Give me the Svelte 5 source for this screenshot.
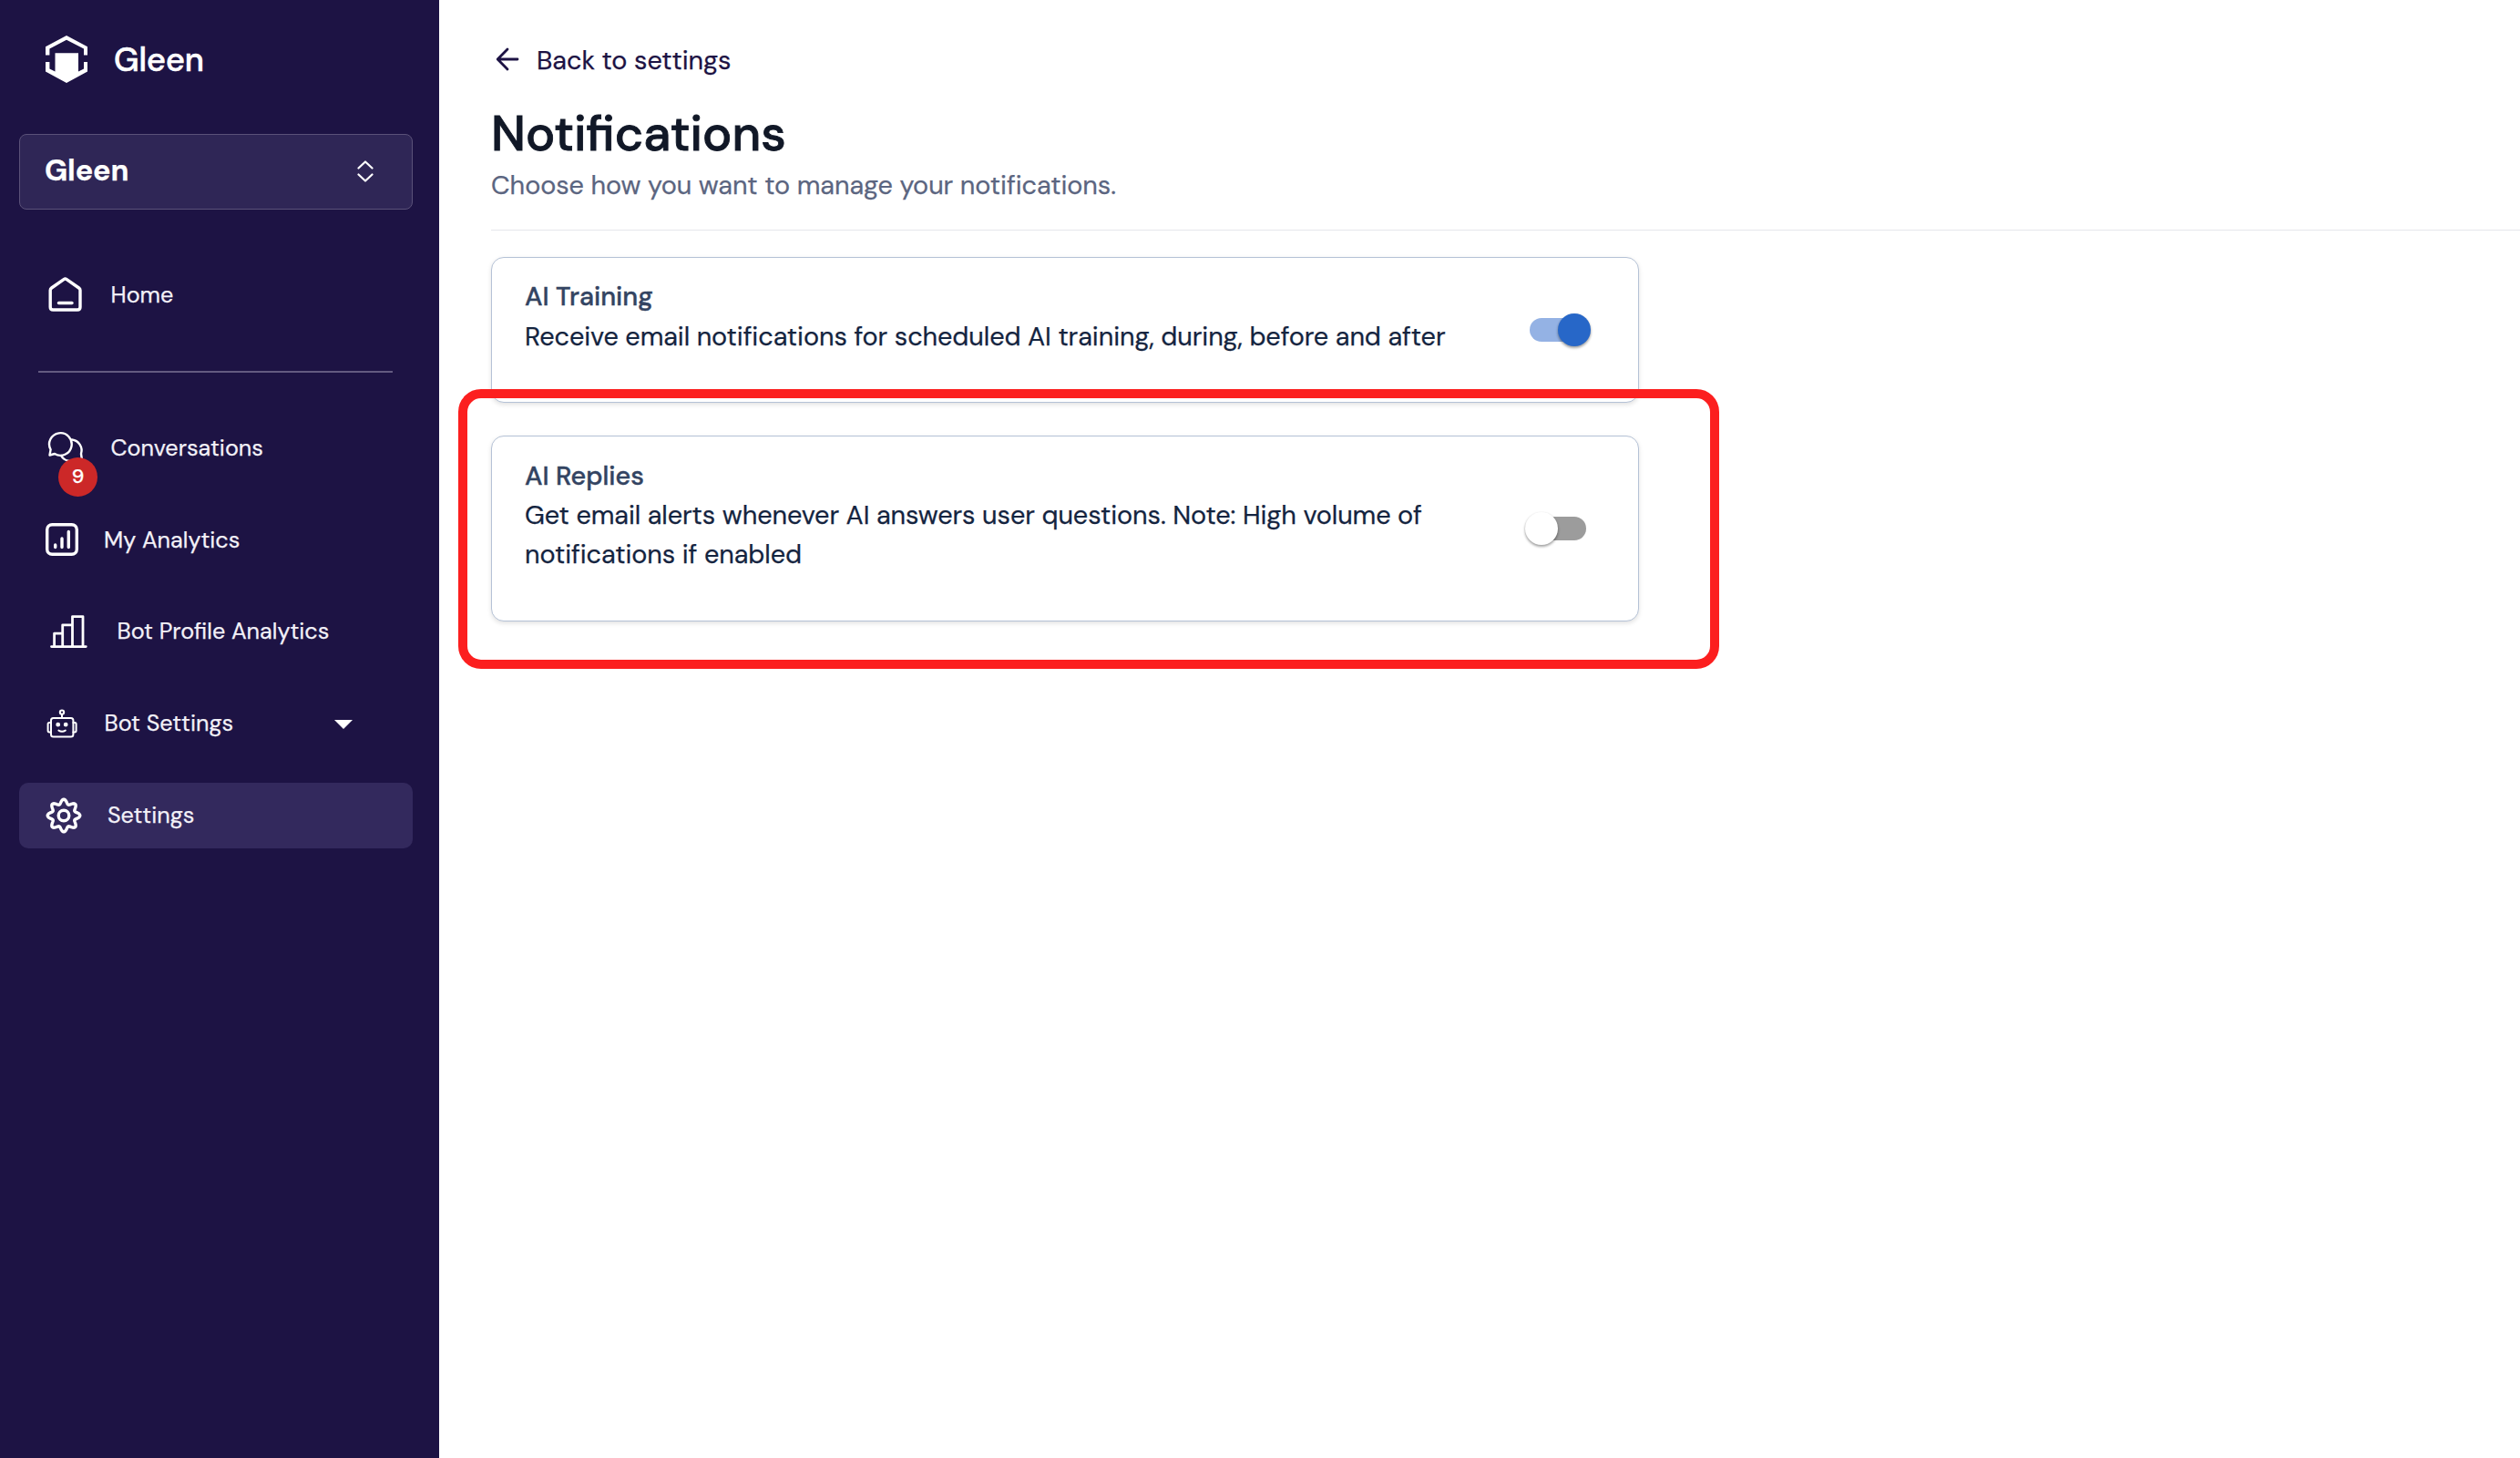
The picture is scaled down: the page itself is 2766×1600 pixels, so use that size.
<script lang="ts">
  type NavItem = { id: string; label: string; badge?: number; caret?: boolean; active?: boolean };

  const home: NavItem = { id: "home", label: "Home" };

  const items: NavItem[] = [
    { id: "conversations", label: "Conversations", badge: 9 },
    { id: "analytics", label: "My Analytics" },
    { id: "profile", label: "Bot Profile Analytics" },
    { id: "bot", label: "Bot Settings", caret: true },
    { id: "settings", label: "Settings", active: true },
  ];

  let training = $state(true);
  let replies = $state(false);

  // Eight-lobed gear outline around the centre of a 40x40 box.
  const gear =
    "M" +
    Array.from({ length: 120 }, (_, i) => {
      const a = (i / 120) * Math.PI * 2;
      const r = 15.3 + 2.5 * Math.cos(8 * a);
      return `${(20 + r * Math.cos(a)).toFixed(2)} ${(20 + r * Math.sin(a)).toFixed(2)}`;
    }).join("L") +
    "Z";
</script>

{#snippet icon(id: string)}
  {#if id === "home"}
    <svg class="icon" width="38" height="38" viewBox="0 0 38 38" stroke-width="3.4">
      <path d="M2.2 14.6Q2.2 13 3.6 12L17 2.6Q18.6 1.5 20.2 2.6L33.6 12Q35 13 35 14.6V33Q35 36 32 36H5.2Q2.2 36 2.2 33Z" />
      <path d="M11.5 28.5H26" />
    </svg>
  {:else if id === "conversations"}
    <svg class="icon" width="40" height="40" viewBox="0 0 40 40" stroke-width="2.4">
      <path d="M2.5 28.5L3.6 22.4A12.3 12.3 0 1 1 8 27Z" />
      <path d="M27 11.5A12 12 0 0 1 37 27L38 34L32 33A12 12 0 0 1 15 29" />
    </svg>
  {:else if id === "analytics"}
    <svg class="icon" width="36" height="36" viewBox="0 0 36 36" stroke-width="3.4">
      <rect x="1.7" y="1.7" width="32.6" height="32.6" rx="5.5" />
      <path d="M10.7 24V26.5M18 17V26.5M25.3 9.5V26.5" />
    </svg>
  {:else if id === "profile"}
    <svg class="icon" width="41" height="38" viewBox="0 0 41 38" stroke-width="2.8">
      <path d="M1.5 35.6H39.3M4.6 35V21.2H13.7M13.7 35V11.8H24.5M24.5 35V2.6H36V35" />
    </svg>
  {:else if id === "bot"}
    <svg class="icon" width="34" height="38" viewBox="0 0 34 38" stroke-width="2">
      <rect x="5" y="13" width="24.4" height="20.4" rx="2.5" />
      <path d="M5 18H3.2Q1.6 18 1.6 19.6V26.8Q1.6 28.4 3.2 28.4H5M29.4 18H31Q32.6 18 32.6 19.6V26.8Q32.6 28.4 31 28.4H29.4M17 9V13M13.4 26.6Q17 28.8 20.8 26.6" />
      <circle cx="17" cy="6.6" r="2.2" />
      <circle cx="12.7" cy="20.2" r="1.4" fill="#fff" />
      <circle cx="21.2" cy="20.2" r="1.4" fill="#fff" />
    </svg>
  {:else}
    <svg class="icon" width="40" height="40" viewBox="0 0 40 40" stroke-width="3.4">
      <path d={gear} />
      <circle cx="20" cy="20" r="5.8" />
    </svg>
  {/if}
{/snippet}

{#snippet navItem(item: NavItem)}
  <a class="nav-item {item.id}" class:active={item.active} href="#{item.id}">
    <span class="icon-wrap">
      {@render icon(item.id)}
      {#if item.badge}<span class="badge">{item.badge}</span>{/if}
    </span>
    <span class="label">{item.label}</span>
    {#if item.caret}<span class="caret"></span>{/if}
  </a>
{/snippet}

<div class="app">
  <aside class="sidebar">
    <div class="brand">
      <svg width="46" height="52" viewBox="0 0 46 52" fill="#fff">
        <path d="M0 21.5V12.3L23 0L46 12.3V21.5H42V14.5L23 4.8L4.4 14.5V21.5Z" />
        <path d="M0 29H4.4V36.5L10.5 39.5V19.3H36V39.5L42 36.5V29H46V39.5L23 52L0 39.5Z" />
      </svg>
      <span class="brand-name">Gleen</span>
    </div>

    <button type="button" class="select">
      <span class="select-name">Gleen</span>
      <svg class="icon" width="18" height="24" viewBox="0 0 18 24" stroke-width="2.2">
        <path d="M1.5 8.5L9 1.5L16.5 8.5M1.5 15.5L9 22.5L16.5 15.5" />
      </svg>
    </button>

    <nav>
      {@render navItem(home)}
      <hr class="nav-divider" />
      {#each items as item (item.id)}
        {@render navItem(item)}
      {/each}
    </nav>
  </aside>

  <main>
    <a class="back" href="#settings">
      <svg width="26" height="26" viewBox="0 0 26 26">
        <path d="M24 13H2.5M13 2L2.2 13L13 24" />
      </svg>
      <span>Back to settings</span>
    </a>
    <h1>Notifications</h1>
    <p class="subtitle">Choose how you want to manage your notifications.</p>
    <hr class="divider" />

    <section class="card">
      <div class="text">
        <h2>AI Training</h2>
        <p>Receive email notifications for scheduled AI training, during, before and after</p>
      </div>
      <button
        type="button"
        class="switch"
        class:on={training}
        aria-label="AI Training"
        aria-pressed={training}
        onclick={() => (training = !training)}
      ><span class="thumb"></span></button>
    </section>

    <div class="highlight-wrap">
      <section class="card tall">
        <div class="text">
          <h2>AI Replies</h2>
          <p>
            Get email alerts whenever AI answers user questions. Note: High volume of<br />
            notifications if enabled
          </p>
        </div>
        <button
          type="button"
          class="switch"
          class:on={replies}
          aria-label="AI Replies"
          aria-pressed={replies}
          onclick={() => (replies = !replies)}
        ><span class="thumb"></span></button>
      </section>
      <div class="highlight"></div>
    </div>
  </main>
</div>

<style>
  :global(body) {
    margin: 0;
    background: #fff;
  }

  .app {
    display: flex;
    height: 1600px;
    overflow: hidden;
    font-family: "DM Sans", Inter, "Open Sans", sans-serif;
    -webkit-text-stroke: 0.25px;
  }

  .app * {
    box-sizing: border-box;
  }

  .sidebar {
    flex: none;
    width: 482px;
    padding: 0 29px 0 21px;
    background: #1d1344;
    color: #fff;
  }

  .icon {
    display: block;
    flex: none;
    fill: none;
    stroke: #fff;
    stroke-linecap: round;
    stroke-linejoin: round;
  }

  .brand {
    display: flex;
    align-items: center;
    gap: 29px;
    height: 130px;
    padding-left: 29px;
  }

  .brand-name {
    font-size: 36px;
    font-weight: 500;
    -webkit-text-stroke-width: 0.6px;
  }

  .select {
    display: flex;
    align-items: center;
    justify-content: space-between;
    width: 100%;
    height: 83px;
    margin: 17px 0 57px;
    padding: 0 42px 2px 27px;
    border: 1px solid #5b5279;
    border-radius: 8px;
    background: #2f2656;
    color: #fff;
    font: inherit;
  }

  .select-name {
    padding-bottom: 1px;
    font-size: 32.4px;
    font-weight: 700;
    letter-spacing: -0.1px;
  }

  .nav-item {
    display: flex;
    align-items: center;
    height: 72px;
    margin-bottom: 29px;
    padding-left: 29px;
    border-radius: 10px;
    color: #f3f1f8;
    font-size: 25.2px;
    text-decoration: none;
    white-space: nowrap;
  }

  .nav-item.active {
    background: #33295d;
  }

  .icon-wrap {
    position: relative;
    flex: none;
  }

  .home {
    gap: 30.5px;
    margin-bottom: 48px;
    padding-left: 32px;
  }

  .conversations {
    gap: 29.5px;
    padding-left: 31px;
  }

  .analytics {
    gap: 28px;
  }

  .profile {
    gap: 32.5px;
    padding-left: 34px;
  }

  .bot {
    gap: 29.5px;
    padding-left: 30px;
  }

  .settings {
    gap: 28px;
  }

  .profile .label,
  .bot .label,
  .settings .label {
    padding-bottom: 2px;
  }

  .badge {
    position: absolute;
    top: 31px;
    left: 12px;
    width: 43px;
    height: 43px;
    border-radius: 50%;
    background: #cc2828;
    color: #fff;
    font-size: 21.6px;
    font-weight: 500;
    line-height: 43px;
    text-align: center;
  }

  .caret {
    margin: 2px 66px 0 auto;
    border: 10px solid transparent;
    border-top: 10px solid #fff;
    border-bottom: 0;
  }

  .nav-divider {
    height: 2px;
    margin: 0 22px 46px 21px;
    border: 0;
    background: #635a80;
  }

  main {
    flex: 1;
    min-width: 0;
    padding: 45px 0 0 57px;
  }

  .back {
    display: flex;
    align-items: center;
    gap: 19px;
    height: 42px;
    padding-left: 5px;
    color: #1d1344;
    font-size: 28.8px;
    letter-spacing: -0.04px;
    text-decoration: none;
  }

  .back svg {
    margin-bottom: 2px;
    fill: none;
    stroke: #1d1344;
    stroke-width: 2.8;
    stroke-linecap: round;
    stroke-linejoin: round;
  }

  h1 {
    margin: 27px 0 0;
    color: #111827;
    font-size: 54px;
    font-weight: 500;
    -webkit-text-stroke-width: 0.9px;
    line-height: 66px;
  }

  .subtitle {
    margin: 3px 0 29px;
    color: #5b6580;
    font-size: 28.8px;
    letter-spacing: -0.04px;
    line-height: 40px;
  }

  .divider {
    height: 1px;
    margin: 0 0 29px;
    border: 0;
    background: #e5e7eb;
  }

  .card {
    display: flex;
    align-items: flex-start;
    width: 1260px;
    height: 160px;
    padding: 21px 52px 0 36px;
    border: 1px solid #b5c2d6;
    border-radius: 14px;
    background: #fff;
    box-shadow: 0 2px 5px rgba(0, 0, 0, 0.12);
  }

  .card.tall {
    height: 204px;
    padding-top: 22px;
  }

  .text {
    flex: 1;
    white-space: nowrap;
  }

  h2 {
    margin: 0;
    color: #334462;
    font-size: 28.8px;
    font-weight: 500;
    -webkit-text-stroke-width: 0.4px;
    line-height: 43.2px;
  }

  .text p {
    margin: 0;
    color: #14243f;
    font-size: 28.8px;
    letter-spacing: -0.06px;
    line-height: 43.2px;
  }

  .card:not(.tall) p {
    padding-top: 1px;
  }

  .switch {
    flex: none;
    position: relative;
    width: 62px;
    height: 26px;
    margin: 45px 5px 0 0;
    padding: 0;
    border: 0;
    border-radius: 13px;
    background: #9c9c9c;
    cursor: pointer;
  }

  .tall .switch {
    margin-top: 66px;
  }

  .switch.on {
    background: #94b2e4;
  }

  .thumb {
    position: absolute;
    top: -5px;
    left: -5px;
    width: 36px;
    height: 36px;
    border-radius: 50%;
    background: #fff;
    box-shadow: 0 2px 3px rgba(0, 0, 0, 0.3), 0 1px 3px rgba(0, 0, 0, 0.14);
  }

  .on .thumb {
    left: 31px;
    background: #2767c8;
  }

  .highlight-wrap {
    position: relative;
    width: 1260px;
    margin-top: 36px;
  }

  /* Frame drawn over the cards to call out the second setting. */
  .highlight {
    position: absolute;
    inset: -51px -88px -52px -36px;
    border: 10px solid #fc1f1f;
    border-radius: 25px;
    pointer-events: none;
  }
</style>
